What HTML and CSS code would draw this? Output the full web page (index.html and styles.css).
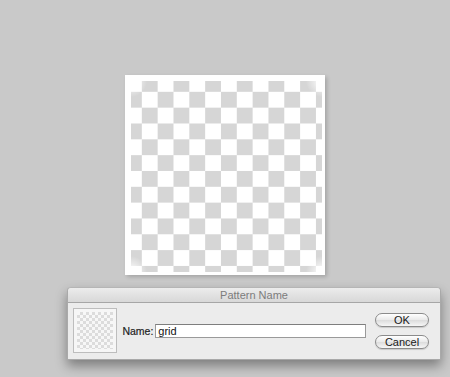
FILE: index.html
```html
<!DOCTYPE html>
<html lang="en">
<head>
    <meta charset="UTF-8">
    <meta name="viewport" content="width=device-width, initial-scale=1.0">
    <title>Pattern Name</title>
    <link rel="stylesheet" href="styles.css">
</head>
<body>

    <div class="workspace">
        <div class="canvas">
            <div class="canvas-grid"></div>
        </div>

        <div class="dialog">
            <div class="dialog-title">Pattern Name</div>
            <div class="dialog-body">
                <div class="thumb">
                    <div class="thumb-grid"></div>
                </div>
                <label class="name-label" for="pattern-name">Name:</label>
                <input class="name-input" id="pattern-name" type="text" value="grid">
                <div class="button-column">
                    <button class="button">OK</button>
                    <button class="button">Cancel</button>
                </div>
            </div>
        </div>
    </div>

</body>
</html>
```

FILE: styles.css
```css
body {
    margin: 0;
    background-color: #c9c9c9;
    font-family: 'Liberation Sans', Arial, sans-serif;
    height: 377px;
    overflow: hidden;
}

.workspace {
    display: flex;
    flex-direction: column;
    align-items: flex-start;
    padding-top: 75px;
}

/* big pattern preview */
.canvas {
    width: 200px;
    height: 200px;
    box-sizing: border-box;
    margin-left: 125px;
    padding: 6px 3px 3px 6px;
    background-color: #fff;
    box-shadow: 2px 2px 4px rgba(0, 0, 0, 0.18);
}

.canvas-grid {
    height: 100%;
    background:
        radial-gradient(circle at 0 0, #fff 0, rgba(255, 255, 255, 0) 16px),
        radial-gradient(circle at 100% 0, #fff 0, rgba(255, 255, 255, 0) 16px),
        radial-gradient(circle at 0 100%, #fff 0, rgba(255, 255, 255, 0) 16px),
        radial-gradient(circle at 100% 100%, #fff 0, rgba(255, 255, 255, 0) 16px),
        repeating-conic-gradient(#d6d6d6 0 25%, #fff 0 50%) -5px -5px / 31.67px 31.67px;
}

/* dialog */
.dialog {
    width: 372px;
    margin: 12px 0 0 67px;
    background-color: #ececec;
    border: 1px solid #a9a9a9;
    border-top-color: #b5b5b5;
    border-radius: 4px 4px 0 0;
    box-shadow: 0 6px 12px rgba(0, 0, 0, 0.38);
}

.dialog-title {
    height: 14px;
    line-height: 14px;
    text-align: center;
    font-size: 11px;
    color: #7c7c7c;
    background: linear-gradient(#ececec, #d8d8d8);
    border-bottom: 1px solid #a6a6a6;
    border-radius: 4px 4px 0 0;
}

.dialog-body {
    display: flex;
    align-items: center;
    padding: 5px 11px 6px 5px;
}

.thumb {
    width: 45px;
    height: 45px;
    box-sizing: border-box;
    padding: 3px;
    background-color: #f6f6f6;
    border: 1px solid #bdbdbd;
}

.thumb-grid {
    height: 100%;
    background: repeating-conic-gradient(#dcdcdc 0 25%, #f7f7f7 0 50%) 0 0 / 6px 6px;
}

.name-label {
    margin-left: 5px;
    font-size: 10.5px;
    color: #1e1e1e;
    -webkit-text-stroke: 0.2px #1e1e1e;
}

.name-input {
    width: 214px;
    height: 14px;
    box-sizing: border-box;
    margin: 0 0 0 2px;
    padding: 0 2px;
    border: 1px solid #9a9a9a;
    border-top-color: #7e7e7e;
    background-color: #fff;
    font-family: 'Liberation Sans', Arial, sans-serif;
    font-size: 11px;
    color: #111;
    outline: none;
}

.button-column {
    display: flex;
    flex-direction: column;
    gap: 8px;
    margin-left: 9px;
}

.button {
    width: 54px;
    height: 14px;
    padding: 0;
    border: 1px solid #8b8b8b;
    border-radius: 7px;
    background: linear-gradient(#ffffff, #e9e9e9 50%, #dcdcdc 51%, #f6f6f6);
    font-family: 'Liberation Sans', Arial, sans-serif;
    font-size: 11px;
    line-height: 12px;
    color: #1a1a1a;
    box-shadow: 0 1px 1px rgba(0, 0, 0, 0.15);
}
```
